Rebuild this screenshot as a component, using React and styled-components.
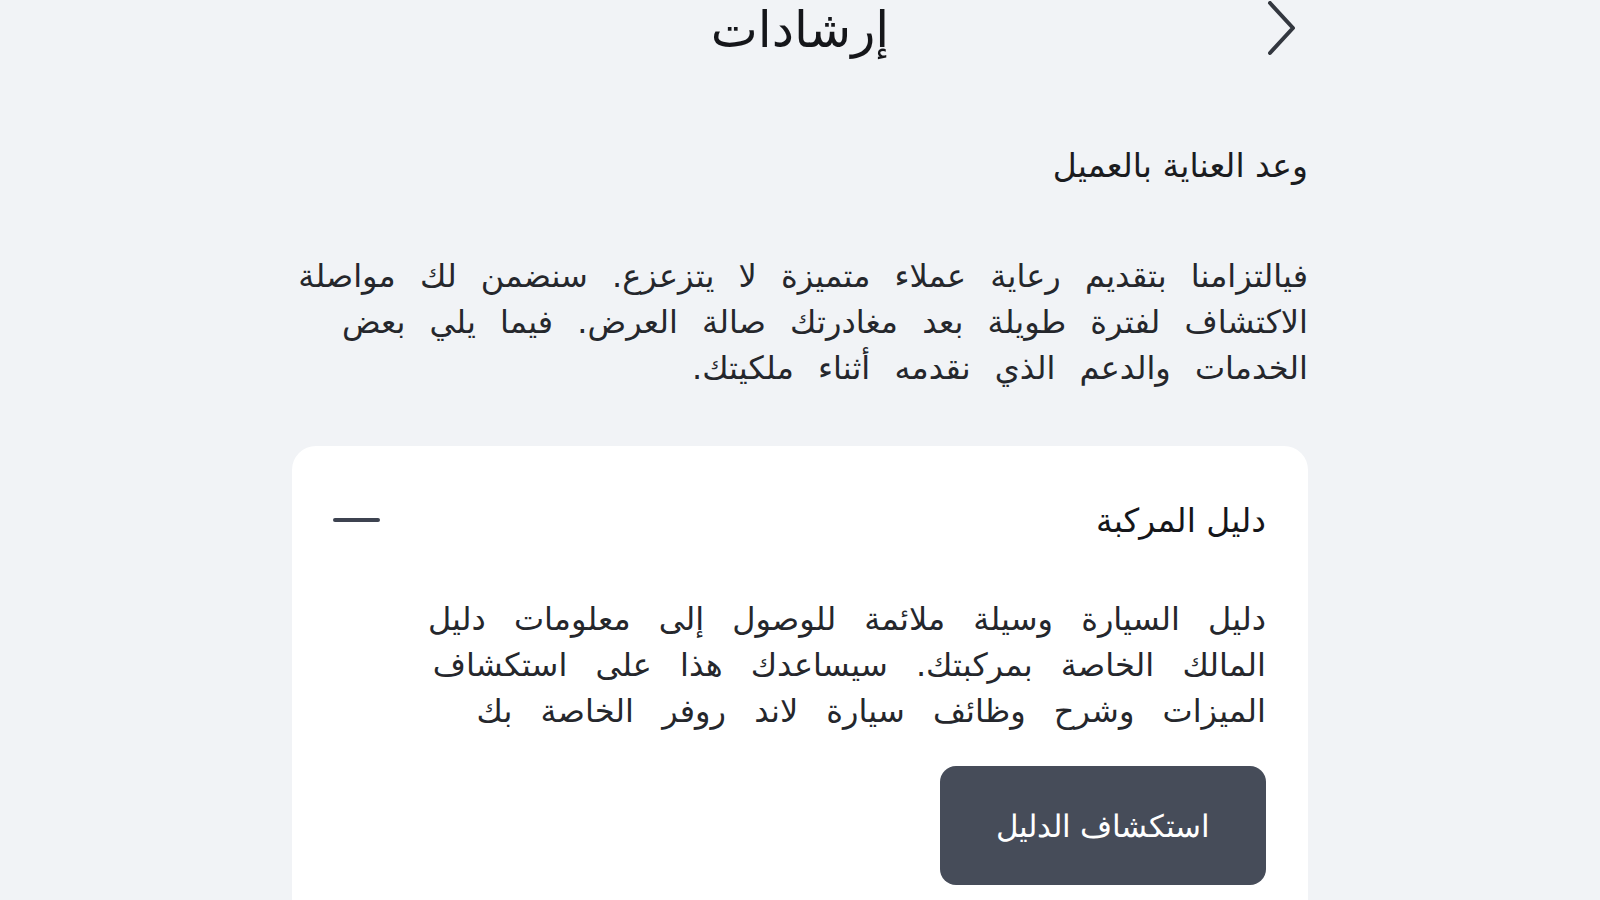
import React from "react";
import styled, { createGlobalStyle } from "styled-components";

const GlobalStyle = createGlobalStyle`
  html, body {
    margin: 0;
    padding: 0;
    background: #f1f3f6;
    overflow: hidden;
  }
  body {
    font-family: "DejaVu Sans", "Noto Sans", sans-serif;
    color: #1b1c1f;
  }
`;

const Page = styled.div`
  display: flex;
  flex-direction: column;
  align-items: center;
  height: 900px;
  overflow: hidden;
`;

const Column = styled.div`
  display: flex;
  flex-direction: column;
  width: 1016px;
`;

const Header = styled.header`
  display: grid;
  grid-template-columns: 1fr auto 1fr;
  align-items: center;
  height: 62px;
  margin-top: -1px;
`;

const BackButton = styled.button`
  justify-self: start;
  display: flex;
  align-items: center;
  justify-content: center;
  width: 44px;
  height: 58px;
  margin-top: -3px;
  margin-right: 4px;
  padding: 0;
  border: none;
  background: none;
  color: #33373f;
  cursor: pointer;
`;

const Title = styled.h1`
  margin: 0;
  font-size: 50px;
  font-weight: 400;
  line-height: 62px;
  color: #15161a;
`;

const SectionTitle = styled.h2`
  margin: 83px 0 0;
  font-size: 33px;
  font-weight: 400;
  line-height: 44px;
`;

const Paragraph = styled.p`
  margin: ${(p) => p.$gap}px 0 0;
  font-size: 32px;
  line-height: 46px;
  word-spacing: ${(p) => p.$spread}px;
  color: #25272c;
`;

const Card = styled.section`
  display: flex;
  flex-direction: column;
  align-items: flex-start;
  margin-top: 55px;
  padding: 51px 42px 40px;
  background: #ffffff;
  border-radius: 24px;
`;

const CardHeader = styled.div`
  display: flex;
  align-items: center;
  justify-content: space-between;
  align-self: stretch;
  height: 46px;
`;

const CardTitle = styled.h3`
  margin: 0;
  font-size: 33px;
  font-weight: 400;
  color: #15161a;
`;

const Minus = styled.span`
  display: block;
  width: 47px;
  height: 4px;
  margin-left: -1px;
  border-radius: 2px;
  background: #3d4350;
`;

const PrimaryButton = styled.button`
  margin-top: 32px;
  width: 326px;
  height: 119px;
  border: none;
  border-radius: 16px;
  background: #464c59;
  color: #ffffff;
  font-family: inherit;
  font-size: 31px;
  font-weight: 200;
  cursor: pointer;
`;

export default function App() {
  return (
    <Page dir="rtl">
      <GlobalStyle />
      <Column>
        <Header>
          <BackButton aria-label="رجوع">
            <svg width="32" height="56" viewBox="0 0 32 56" fill="none">
              <path
                d="M4 2 L27 27 L4 52"
                stroke="currentColor"
                strokeWidth="4"
                strokeLinecap="round"
                strokeLinejoin="round"
              />
            </svg>
          </BackButton>
          <Title>إرشادات</Title>
          <span />
        </Header>

        <SectionTitle>وعد العناية بالعميل</SectionTitle>
        <Paragraph $gap={65} $spread={14}>
          فيالتزامنا بتقديم رعاية عملاء متميزة لا يتزعزع. سنضمن لك مواصلة
          <br />
          الاكتشاف لفترة طويلة بعد مغادرتك صالة العرض. فيما يلي بعض
          <br />
          الخدمات والدعم الذي نقدمه أثناء ملكيتك.
        </Paragraph>

        <Card>
          <CardHeader>
            <CardTitle>دليل المركبة</CardTitle>
            <Minus />
          </CardHeader>
          <Paragraph $gap={53} $spread={18}>
            دليل السيارة وسيلة ملائمة للوصول إلى معلومات دليل
            <br />
            المالك الخاصة بمركبتك. سيساعدك هذا على استكشاف
            <br />
            الميزات وشرح وظائف سيارة لاند روفر الخاصة بك
          </Paragraph>
          <PrimaryButton>استكشاف الدليل</PrimaryButton>
        </Card>
      </Column>
    </Page>
  );
}
